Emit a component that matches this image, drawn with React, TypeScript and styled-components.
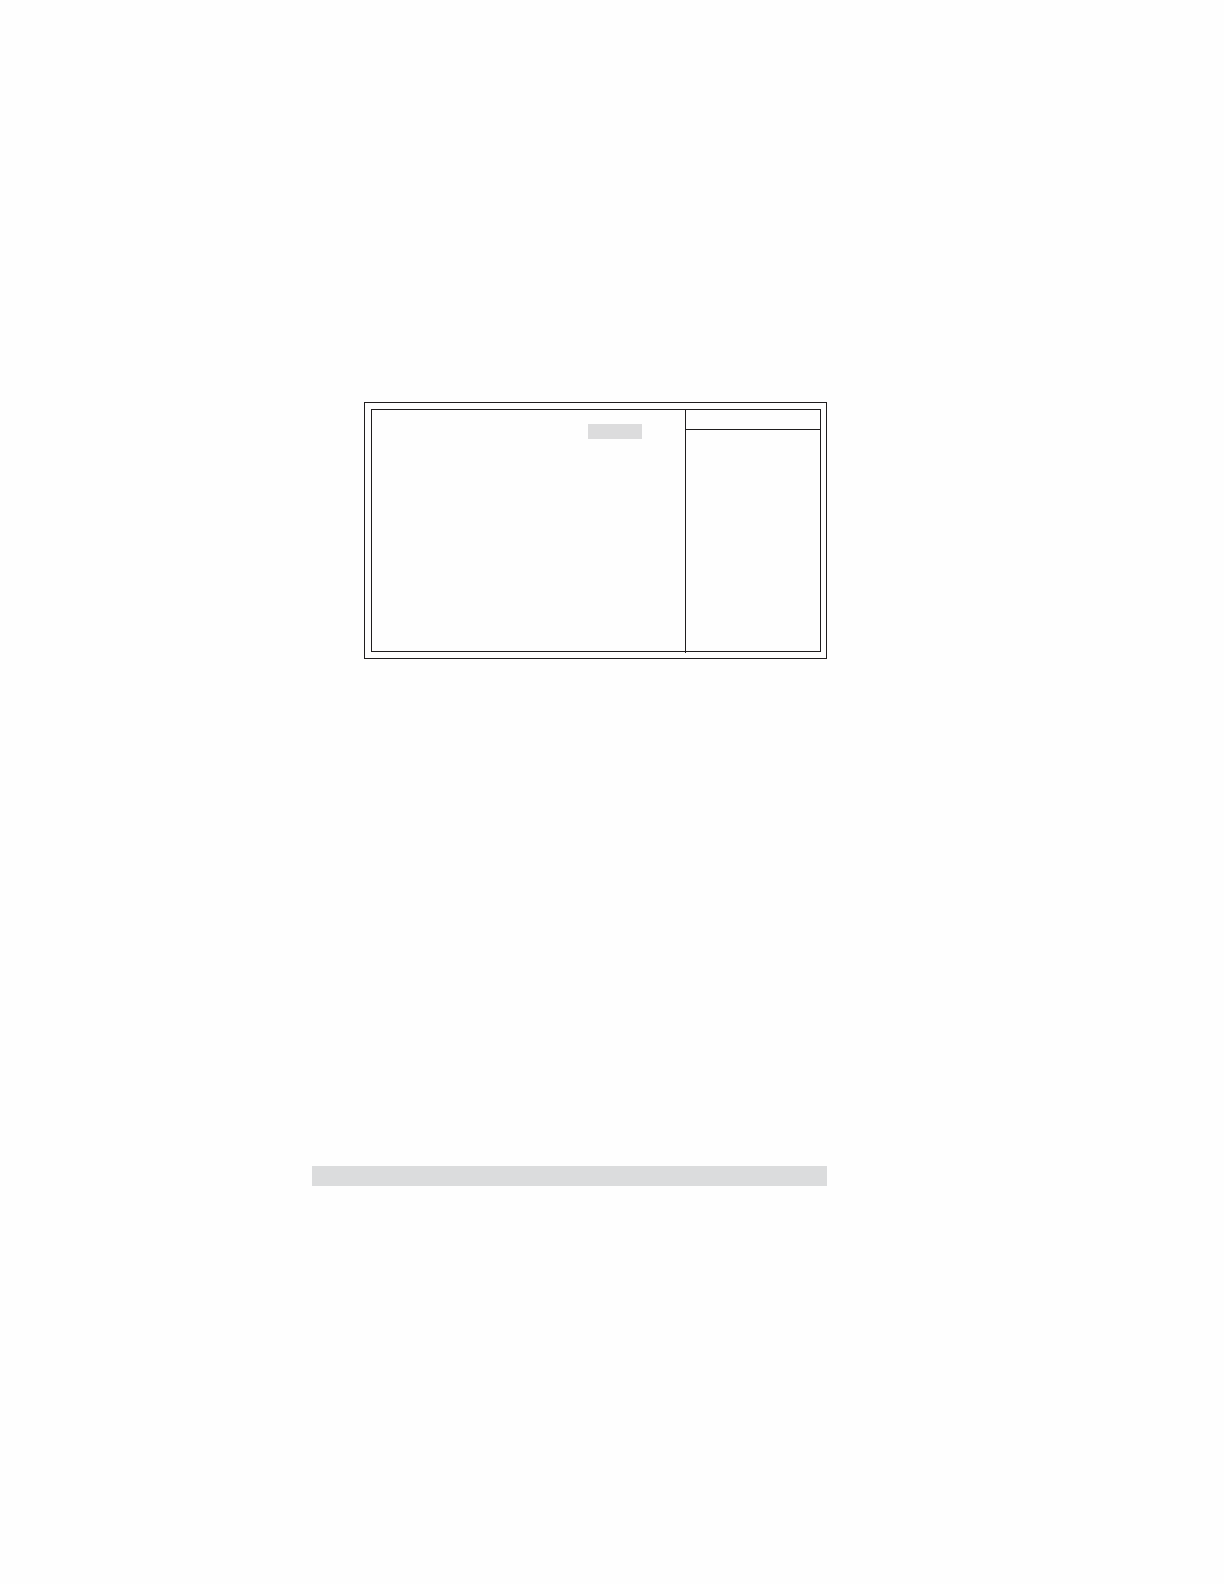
import React from "react";
import styled, { createGlobalStyle, ThemeProvider } from "styled-components";

const theme = {
  paper: "#fefefe",
  line: "#1f1d1e",
  highlight: "#dcdcdd",
  bar: "#dbdcdd",
};

const GlobalStyle = createGlobalStyle`
  *, *::before, *::after {
    box-sizing: border-box;
  }
  body {
    margin: 0;
    background: ${theme.paper};
    font-family: "Liberation Sans", Arial, sans-serif;
  }
`;

const Page = styled.main`
  display: flex;
  flex-direction: column;
  gap: 507px;
  min-height: 100vh;
  padding: 402px 397px 0 312px;
`;

const Frame = styled.section`
  margin-left: 52px;
  padding: 6px 5px 6px 6px;
  border: 1px solid ${(p) => p.theme.line};
`;

const Screen = styled.div`
  display: grid;
  grid-template-columns: minmax(0, 1fr) 135px;
  min-height: 243px;
  border: 1px solid ${(p) => p.theme.line};
`;

const Settings = styled.div`
  display: flex;
  align-items: flex-start;
  justify-content: flex-end;
  padding: 14px 43px;
`;

const SelectedValue = styled.div`
  width: 54px;
  height: 15px;
  background: ${(p) => p.theme.highlight};
`;

/* The divider runs slightly past the bottom rule of the screen. */
const HelpPane = styled.aside`
  margin-bottom: -2px;
  border-left: 1px solid ${(p) => p.theme.line};
`;

const HelpHeader = styled.header`
  height: 20px;
  border-bottom: 1px solid ${(p) => p.theme.line};
`;

const SectionBar = styled.div`
  height: 20px;
  background: ${(p) => p.theme.bar};
`;

export default function App() {
  return (
    <ThemeProvider theme={theme}>
      <GlobalStyle />
      <Page>
        <Frame>
          <Screen>
            <Settings>
              <SelectedValue />
            </Settings>
            <HelpPane>
              <HelpHeader />
            </HelpPane>
          </Screen>
        </Frame>
        <SectionBar />
      </Page>
    </ThemeProvider>
  );
}
